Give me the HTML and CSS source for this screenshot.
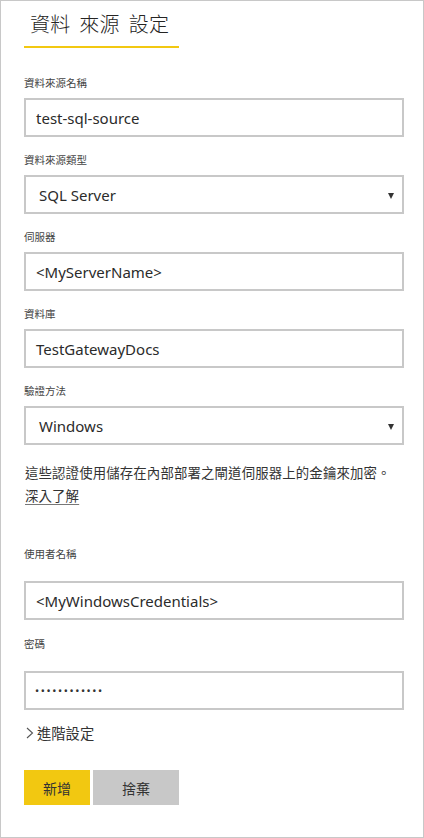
FILE: index.html
```html
<!DOCTYPE html>
<html lang="zh-Hant">
<head>
<meta charset="utf-8">
<title>資料來源設定</title>
<link rel="stylesheet" href="styles.css">
</head>
<body>
<div class="panel">
  <div class="header"><h1 class="title">資料 來源 設定</h1></div>

  <div class="field">
    <div class="label">資料來源名稱</div>
    <div class="box">test-sql-source</div>
  </div>
  <div class="field">
    <div class="label">資料來源類型</div>
    <div class="box select">SQL Server<span class="caret"></span></div>
  </div>
  <div class="field">
    <div class="label">伺服器</div>
    <div class="box">&lt;MyServerName&gt;</div>
  </div>
  <div class="field">
    <div class="label">資料庫</div>
    <div class="box">TestGatewayDocs</div>
  </div>
  <div class="field">
    <div class="label">驗證方法</div>
    <div class="box select">Windows<span class="caret"></span></div>
  </div>

  <p class="note">這些認證使用儲存在內部部署之閘道伺服器上的金鑰來加密。<br><a class="link" href="#">深入了解</a></p>

  <div class="field loose first-loose">
    <div class="label">使用者名稱</div>
    <div class="box">&lt;MyWindowsCredentials&gt;</div>
  </div>
  <div class="field loose">
    <div class="label">密碼</div>
    <div class="box password">••••••••••••</div>
  </div>

  <div class="advanced">
    <svg class="chev" width="8" height="12" viewBox="0 0 8 12"><polyline points="1,1 6.5,6 1,11" fill="none" stroke="#555" stroke-width="1.1"/></svg>
    <span>進階設定</span>
  </div>

  <div class="actions">
    <button class="btn primary">新增</button>
    <button class="btn secondary">捨棄</button>
  </div>
</div>
</body>
</html>
```
FILE: styles.css
```css
* { box-sizing: border-box; }
html, body { margin: 0; padding: 0; background: #fff; }
body {
  font-family: "Noto Sans", "Noto Sans CJK TC", sans-serif;
  color: #333;
}
.panel {
  width: 424px;
  height: 838px;
  border: 1px solid #c8c8c8;
  padding: 0 0 0 23px;
  display: flex;
  flex-direction: column;
}
.header { padding-top: 8px; }
.title {
  margin: 0;
  width: 155px;
  padding: 0 0 7px 6px;
  font-family: "Noto Sans CJK TC", sans-serif;
  font-weight: 300;
  font-size: 20px;
  line-height: 30px;
  letter-spacing: 0.3px;
  word-spacing: 4px;
  color: #252423;
  border-bottom: 2px solid #f2c811;
}
.field { display: flex; flex-direction: column; }
.header + .field { margin-top: 28px; }
.field + .field { margin-top: 16px; }
.label {
  font-family: "Noto Sans CJK TC", sans-serif;
  font-size: 10.5px;
  line-height: 14px;
  color: #444;
  margin-bottom: 8px;
}
.box {
  width: 380px;
  height: 39px;
  border: 2px solid #c8c8c8;
  padding: 0 0 0 10px;
  display: flex;
  align-items: center;
  font-size: 15px;
  color: #2b2b2b;
  position: relative;
}
.select { padding-left: 13px; }
.caret {
  position: absolute;
  right: 8px;
  top: 16px;
  width: 0;
  height: 0;
  border-left: 3px solid transparent;
  border-right: 3px solid transparent;
  border-top: 6px solid #333;
}
.note {
  margin: 16px 0 0 1px;
  font-family: "Noto Sans CJK TC", sans-serif;
  font-size: 13.4px;
  letter-spacing: 0.15px;
  line-height: 23px;
  color: #333;
}
.link { color: #333; text-decoration: underline; text-decoration-color: #777; text-underline-offset: 3px; }
.loose .label { margin-bottom: 20px; }
.field.first-loose { margin-top: 40px; }
.field.loose + .field.loose { margin-top: 17px; }
.password {
  font-size: 11px;
  letter-spacing: 1.6px;
  color: #333;
  padding-left: 9px;
}
.advanced {
  margin-top: 13px;
  display: flex;
  align-items: center;
  gap: 3px;
  font-family: "Noto Sans CJK TC", sans-serif;
  font-size: 14.3px;
  line-height: 20px;
  color: #333;
  padding-left: 2px;
}
.chev { display: block; }
.actions {
  margin-top: 27px;
  display: flex;
  gap: 3px;
}
.btn {
  height: 35px;
  border: none;
  padding: 0;
  font-family: "Noto Sans CJK TC", sans-serif;
  font-size: 14px;
  color: #333;
}
.primary { width: 66px; background: #f2c811; }
.secondary { width: 86px; background: #c8c8c8; }
```
